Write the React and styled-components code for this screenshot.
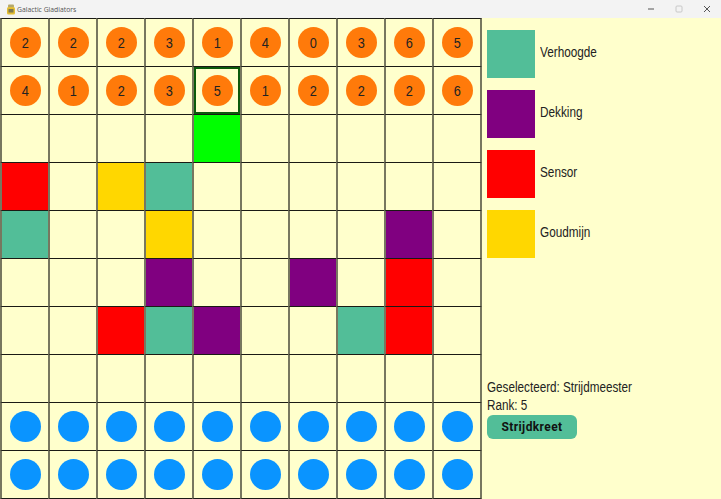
import React from 'react';
import styled, { createGlobalStyle } from 'styled-components';

const GlobalStyle = createGlobalStyle`
  html, body {
    margin: 0;
    padding: 0;
    width: 721px;
    height: 499px;
    overflow: hidden;
    background: #ffffcc;
    font-family: "Liberation Sans", Arial, sans-serif;
  }
`;

const Window = styled.div`
  width: 721px;
  height: 499px;
  display: flex;
  flex-direction: column;
  background: #ffffcc;
`;

const TitleBar = styled.div`
  height: 18px;
  flex: none;
  display: flex;
  align-items: center;
  padding-left: 7px;
  gap: 2px;
  background: #f3f3f3;
  color: #555;
  font-family: "Open Sans", sans-serif;
  font-size: 6.8px;
`;

const Title = styled.span`
  flex: 1;
`;

const WindowButtons = styled.div`
  display: flex;
`;

const WindowButton = styled.div`
  width: 28px;
  height: 18px;
  display: flex;
  align-items: center;
  justify-content: center;
`;

const Main = styled.div`
  flex: 1;
  display: flex;
  min-height: 0;
`;

const Board = styled.div`
  flex: none;
  width: 482px;
  height: 481px;
  display: grid;
  grid-template-columns: repeat(9, 48px) 50px;
  grid-template-rows: repeat(9, 48px) 49px;
`;

const Cell = styled.div`
  box-sizing: border-box;
  display: flex;
  align-items: center;
  justify-content: center;
  background: ${(props) => props.color || '#ffffcc'};
  border-top: 1px solid #1a1a14;
  border-left: 2px solid #77775f;
  border-right: ${(props) => (props.last ? '2px solid #77775f' : 'none')};
  border-bottom: ${(props) => (props.bottom ? '1px solid #1a1a14' : 'none')};
  box-shadow: ${(props) => (props.selected ? 'inset 0 0 0 2px #0b5a0b' : 'none')};
`;

const Piece = styled.div`
  width: 31px;
  height: 31px;
  border-radius: 50%;
  display: flex;
  align-items: center;
  justify-content: center;
  background: ${(props) => props.color};
  color: #222;
  font-size: 15px;
`;

// de screenshot is horizontaal samengedrukt, vandaar de scaleX op de tekst
const Digit = styled.span`
  display: inline-block;
  transform: scaleX(0.85);
`;

const Side = styled.div`
  flex: 1;
  display: flex;
  flex-direction: column;
  padding: 12px 0 60px 5px;
`;

const Legend = styled.div`
  display: flex;
  flex-direction: column;
  gap: 12px;
`;

const LegendRow = styled.div`
  display: flex;
  align-items: center;
  gap: 5px;
`;

const Swatch = styled.div`
  width: 48px;
  height: 48px;
  background: ${(props) => props.color};
`;

const Label = styled.span`
  font-size: 14px;
  color: #222;
  margin-bottom: 4px;
  transform: scaleX(0.84);
  transform-origin: left center;
`;

const Selection = styled.div`
  margin-top: auto;
  display: flex;
  flex-direction: column;
  align-items: flex-start;
`;

const InfoLine = styled.div`
  font-size: 14px;
  line-height: 18px;
  color: #222;
  white-space: nowrap;
  transform: scaleX(0.835);
  transform-origin: left center;
`;

const ActionButton = styled.button`
  width: 90px;
  height: 24px;
  margin-top: 1px;
  border: none;
  padding: 0;
  border-radius: 6px;
  background: #52be98;
  color: #111;
  font-family: Roboto, sans-serif;
  font-weight: 700;
  font-size: 12px;
  letter-spacing: 0.4px;
`;

const TEAL = '#52be98';
const PURPLE = '#800080';
const RED = '#ff0000';
const GOLD = '#ffd700';
const GREEN = '#00ff00';
const ORANGE = '#ff7a0a';
const BLUE = '#0a94ff';

const ranks = [
  [2, 2, 2, 3, 1, 4, 0, 3, 6, 5],
  [4, 1, 2, 3, 5, 1, 2, 2, 2, 6],
];

const terrain = {
  '2-4': GREEN,
  '3-0': RED,
  '3-2': GOLD,
  '3-3': TEAL,
  '4-0': TEAL,
  '4-3': GOLD,
  '4-8': PURPLE,
  '5-3': PURPLE,
  '5-6': PURPLE,
  '5-8': RED,
  '6-2': RED,
  '6-3': TEAL,
  '6-4': PURPLE,
  '6-7': TEAL,
  '6-8': RED,
};

const legend = [
  { color: TEAL, label: 'Verhoogde' },
  { color: PURPLE, label: 'Dekking' },
  { color: RED, label: 'Sensor' },
  { color: GOLD, label: 'Goudmijn' },
];

function App() {
  const cells = [];
  for (let r = 0; r < 10; r++) {
    for (let c = 0; c < 10; c++) {
      cells.push(
        <Cell
          key={`${r}-${c}`}
          color={terrain[`${r}-${c}`]}
          selected={r === 1 && c === 4}
          last={c === 9}
          bottom={r === 9}
        >
          {r < 2 && <Piece color={ORANGE}><Digit>{ranks[r][c]}</Digit></Piece>}
          {r > 7 && <Piece color={BLUE} />}
        </Cell>
      );
    }
  }

  return (
    <Window>
      <GlobalStyle />
      <TitleBar>
        <svg width="8" height="11" viewBox="0 0 8 11">
          <rect x="1" y="0.5" width="6" height="3" rx="1" fill="#b5a86a" />
          <rect x="0" y="3" width="8" height="7.5" rx="1.5" fill="#e3bd35" />
          <rect x="1.5" y="5" width="5" height="3.5" fill="#7d7850" />
        </svg>
        <Title>Galactic Gladiators</Title>
        <WindowButtons>
          <WindowButton>
            <svg width="8" height="8" viewBox="0 0 8 8"><path d="M1 4h6" stroke="#555" strokeWidth="1" /></svg>
          </WindowButton>
          <WindowButton>
            <svg width="8" height="8" viewBox="0 0 8 8"><rect x="1" y="1" width="6" height="6" rx="1" fill="none" stroke="#c8c8c8" strokeWidth="1" /></svg>
          </WindowButton>
          <WindowButton>
            <svg width="8" height="8" viewBox="0 0 8 8"><path d="M1 1l6 6M7 1l-6 6" stroke="#555" strokeWidth="1" /></svg>
          </WindowButton>
        </WindowButtons>
      </TitleBar>
      <Main>
        <Board>{cells}</Board>
        <Side>
          <Legend>
            {legend.map((item) => (
              <LegendRow key={item.label}>
                <Swatch color={item.color} />
                <Label>{item.label}</Label>
              </LegendRow>
            ))}
          </Legend>
          <Selection>
            <InfoLine>Geselecteerd: Strijdmeester</InfoLine>
            <InfoLine>Rank: 5</InfoLine>
            <ActionButton>Strijdkreet</ActionButton>
          </Selection>
        </Side>
      </Main>
    </Window>
  );
}

export default App;
